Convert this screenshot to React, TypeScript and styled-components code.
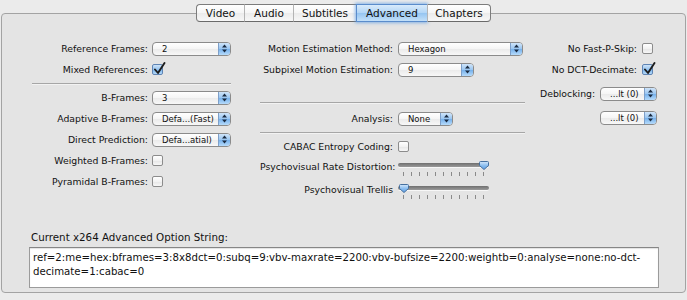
import styled, { createGlobalStyle } from 'styled-components';

const GlobalStyle = createGlobalStyle`
  html, body {
    margin: 0;
    padding: 0;
    background: #ebebeb;
  }
  body {
    font-family: "DejaVu Sans", "Liberation Sans", sans-serif;
    color: #111;
  }
`;

const Window = styled.div`
  width: 687px;
  height: 300px;
  box-sizing: border-box;
  padding-top: 4px;
  overflow: hidden;
  background: #ebebeb;
`;

const TabBar = styled.div`
  position: relative;
  z-index: 1;
  display: flex;
  justify-content: center;
  height: 18px;
`;

const Tab = styled.div<{ $w: number; $active?: boolean; $first?: boolean; $last?: boolean }>`
  width: ${(p) => p.$w}px;
  height: 18px;
  box-sizing: border-box;
  display: flex;
  align-items: center;
  justify-content: center;
  font-size: 10.5px;
  color: #111;
  border-top: 1px solid #7c7c7c;
  border-bottom: 1px solid #6a6a6a;
  border-left: 1px solid ${(p) => (p.$first ? '#7c7c7c' : '#b4b4b4')};
  border-right: ${(p) => (p.$last ? '1px solid #7c7c7c' : 'none')};
  border-radius: ${(p) => (p.$first ? '4px 0 0 4px' : p.$last ? '0 4px 4px 0' : '0')};
  background: ${(p) =>
    p.$active
      ? 'linear-gradient(#d9ebfb, #b3d6f6 48%, #96c5f1 52%, #c3e0f9)'
      : 'linear-gradient(#ffffff, #f6f6f6 48%, #ececec 52%, #f7f7f7)'};
  box-shadow: ${(p) => (p.$active ? '0 0 3px 1px rgba(94, 156, 226, 0.7)' : 'none')};
  border-color: ${(p) => (p.$active ? '#5a8ccb' : undefined)};
`;

const Panel = styled.div`
  margin: -9px 1px 0;
  height: 280px;
  box-sizing: border-box;
  border: 1px solid #a3a3a3;
  border-radius: 4px;
  background: #e4e4e4;
  padding: 24px 26px 0 27px;
`;

const Top = styled.div`
  display: flex;
  height: 165px;
`;

const Column = styled.div<{ $w: number; $ml: number }>`
  width: ${(p) => p.$w}px;
  margin-left: ${(p) => p.$ml}px;
  display: flex;
  flex-direction: column;
`;

const Row = styled.div<{ $label: number; $gap: number }>`
  display: grid;
  grid-template-columns: ${(p) => p.$label}px 1fr;
  column-gap: ${(p) => p.$gap}px;
  align-items: center;
  height: 21px;
`;

const SliderRow = styled(Row)`
  align-items: start;
  height: 23px;
`;

const RightRow = styled.div<{ $mt?: number; $pr?: number }>`
  display: flex;
  justify-content: flex-end;
  align-items: center;
  gap: 5px;
  height: 21px;
  margin-top: ${(p) => p.$mt ?? 0}px;
  padding-right: ${(p) => p.$pr ?? 0}px;
`;

const Label = styled.span`
  font-size: 9.3px;
  text-align: right;
  white-space: nowrap;
  line-height: 20px;
`;

const Separator = styled.div<{ $mt: number; $mb: number }>`
  height: 1px;
  background: #a6a6a6;
  border-bottom: 1px solid #f2f2f2;
  margin: ${(p) => p.$mt}px 0 ${(p) => p.$mb - 1}px;
`;

const PopupBox = styled.div<{ $w: number }>`
  width: ${(p) => p.$w}px;
  height: 14px;
  box-sizing: border-box;
  display: flex;
  align-items: stretch;
  border: 1px solid #8b8b8b;
  border-radius: 4px;
  background: linear-gradient(#ffffff, #f5f5f5 50%, #ebebeb 52%, #f8f8f8);
  overflow: hidden;
`;

const PopupText = styled.span`
  flex: 1;
  padding-left: 9px;
  font-size: 8.5px;
  line-height: 12px;
  white-space: nowrap;
  overflow: hidden;
  color: #111;
`;

const PopupArrows = styled.span`
  width: 11px;
  display: flex;
  align-items: center;
  justify-content: center;
  border-left: 1px solid #7d9fc9;
  background: linear-gradient(#cfe4f9, #9ac6f1 48%, #76b1ec 52%, #b6dbfb);
`;

const CheckBox = styled.div<{ $checked?: boolean }>`
  position: relative;
  width: 11px;
  height: 11px;
  box-sizing: border-box;
  border: 1px solid ${(p) => (p.$checked ? '#5f84b4' : '#8c8c8c')};
  border-radius: 2px;
  background: ${(p) =>
    p.$checked
      ? 'linear-gradient(#cde3f8, #95c3f0 50%, #7ab4ec 52%, #b5d9f9)'
      : 'linear-gradient(#ffffff, #f2f2f2 50%, #e6e6e6 52%, #f7f7f7)'};

  svg {
    position: absolute;
    left: 0px;
    top: -3px;
  }
`;

const SliderBox = styled.div`
  position: relative;
  width: 91px;
  height: 23px;
`;

const Track = styled.div`
  position: absolute;
  left: 0;
  right: 0;
  top: 6px;
  height: 4px;
  border-radius: 2px;
  background: linear-gradient(#6f6f6f, #9a9a9a);
  box-shadow: 0 1px 0 rgba(255, 255, 255, 0.7);
`;

const Knob = styled.svg`
  position: absolute;
  top: 4px;
`;

const Ticks = styled.div`
  position: absolute;
  left: 5px;
  right: 5px;
  top: 15px;
  display: flex;
  justify-content: space-between;
`;

const Tick = styled.span`
  width: 1px;
  height: 4px;
  background: #8a8a8a;
`;

const Bottom = styled.div`
  display: flex;
  flex-direction: column;
`;

const StringLabel = styled.div`
  margin: 28px 0 0 2px;
  font-size: 10.3px;
  line-height: 13px;
`;

const OptionString = styled.div`
  margin-top: 3px;
  height: 41px;
  box-sizing: border-box;
  border: 1px solid #9b9b9b;
  border-top-color: #868686;
  background: #fff;
  padding: 3px 3px 0 3px;
  font-size: 10.2px;
  line-height: 14px;
  color: #111;
  box-shadow: inset 0 1px 1px rgba(0, 0, 0, 0.12);
`;

function Popup({ w, value }: { w: number; value: string }) {
  return (
    <PopupBox $w={w}>
      <PopupText>{value}</PopupText>
      <PopupArrows>
        <svg width="5" height="9" viewBox="0 0 5 9">
          <path d="M2.5 0.5 L5 3.5 L0 3.5 Z" fill="#1a2a40" />
          <path d="M2.5 8.5 L5 5.5 L0 5.5 Z" fill="#1a2a40" />
        </svg>
      </PopupArrows>
    </PopupBox>
  );
}

function Check({ checked }: { checked?: boolean }) {
  return (
    <CheckBox $checked={checked}>
      {checked && (
        <svg width="13" height="13" viewBox="0 0 13 13">
          <path
            d="M2 7.5 L5 11 L11.5 1"
            fill="none"
            stroke="#1c1c1c"
            strokeWidth="1.9"
            strokeLinecap="round"
            strokeLinejoin="round"
          />
        </svg>
      )}
    </CheckBox>
  );
}

function Slider({ knob }: { knob: number }) {
  return (
    <SliderBox>
      <Track />
      <Knob width="10" height="9" viewBox="0 0 10 9" style={{ left: knob }}>
        <defs>
          <linearGradient id={`kg${knob}`} x1="0" y1="0" x2="0" y2="1">
            <stop offset="0" stopColor="#d4e7fa" />
            <stop offset="0.5" stopColor="#8dbff0" />
            <stop offset="1" stopColor="#5c9de4" />
          </linearGradient>
        </defs>
        <path
          d="M1.5 0.5 H8.5 Q9.5 0.5 9.5 1.5 V4.5 L5 8.5 L0.5 4.5 V1.5 Q0.5 0.5 1.5 0.5 Z"
          fill={`url(#kg${knob})`}
          stroke="#46709f"
          strokeWidth="1"
        />
      </Knob>
      <Ticks>
        {Array.from({ length: 11 }).map((_, i) => (
          <Tick key={i} />
        ))}
      </Ticks>
    </SliderBox>
  );
}

const tabs = [
  { name: 'Video', w: 48 },
  { name: 'Audio', w: 49 },
  { name: 'Subtitles', w: 63 },
  { name: 'Advanced', w: 71 },
  { name: 'Chapters', w: 64 },
];

export default function App() {
  return (
    <Window>
      <GlobalStyle />
      <TabBar>
        {tabs.map((t, i) => (
          <Tab
            key={t.name}
            $w={t.w}
            $first={i === 0}
            $last={i === tabs.length - 1}
            $active={t.name === 'Advanced'}
          >
            {t.name}
          </Tab>
        ))}
      </TabBar>
      <Panel>
        <Top>
          <Column $w={199} $ml={3}>
            <Row $label={116} $gap={4}>
              <Label>Reference Frames:</Label>
              <Popup w={79} value="2" />
            </Row>
            <Row $label={116} $gap={4}>
              <Label>Mixed References:</Label>
              <Check checked />
            </Row>
            <Separator $mt={3} $mb={3} />
            <Row $label={116} $gap={4}>
              <Label>B-Frames:</Label>
              <Popup w={79} value="3" />
            </Row>
            <Row $label={116} $gap={4}>
              <Label>Adaptive B-Frames:</Label>
              <Popup w={79} value="Defa...(Fast)" />
            </Row>
            <Row $label={116} $gap={4}>
              <Label>Direct Prediction:</Label>
              <Popup w={79} value="Defa...atial)" />
            </Row>
            <Row $label={116} $gap={4}>
              <Label>Weighted B-Frames:</Label>
              <Check />
            </Row>
            <Row $label={116} $gap={4}>
              <Label>Pyramidal B-Frames:</Label>
              <Check />
            </Row>
          </Column>

          <Column $w={265} $ml={29}>
            <Row $label={133} $gap={5}>
              <Label>Motion Estimation Method:</Label>
              <Popup w={125} value="Hexagon" />
            </Row>
            <Row $label={133} $gap={5}>
              <Label>Subpixel Motion Estimation:</Label>
              <Popup w={76} value="9" />
            </Row>
            <Separator $mt={22} $mb={5} />
            <Row $label={133} $gap={5}>
              <Label>Analysis:</Label>
              <Popup w={55} value="None" />
            </Row>
            <Separator $mt={3} $mb={3} />
            <Row $label={133} $gap={5}>
              <Label>CABAC Entropy Coding:</Label>
              <Check />
            </Row>
            <SliderRow $label={133} $gap={5}>
              <Label>Psychovisual Rate Distortion:</Label>
              <Slider knob={81} />
            </SliderRow>
            <SliderRow $label={133} $gap={5}>
              <Label>Psychovisual Trellis</Label>
              <Slider knob={1} />
            </SliderRow>
          </Column>

          <Column $w={117} $ml={15}>
            <RightRow $pr={4}>
              <Label>No Fast-P-Skip:</Label>
              <Check />
            </RightRow>
            <RightRow $pr={4}>
              <Label>No DCT-Decimate:</Label>
              <Check checked />
            </RightRow>
            <RightRow $mt={3}>
              <Label>Deblocking:</Label>
              <Popup w={57} value="...lt (0)" />
            </RightRow>
            <RightRow $mt={3}>
              <Popup w={57} value="...lt (0)" />
            </RightRow>
          </Column>
        </Top>

        <Bottom>
          <StringLabel>Current x264 Advanced Option String:</StringLabel>
          <OptionString>
            ref=2:me=hex:bframes=3:8x8dct=0:subq=9:vbv-maxrate=2200:vbv-bufsize=2200:weightb=0:analyse=none:no-dct-
            <br />
            decimate=1:cabac=0
          </OptionString>
        </Bottom>
      </Panel>
    </Window>
  );
}
